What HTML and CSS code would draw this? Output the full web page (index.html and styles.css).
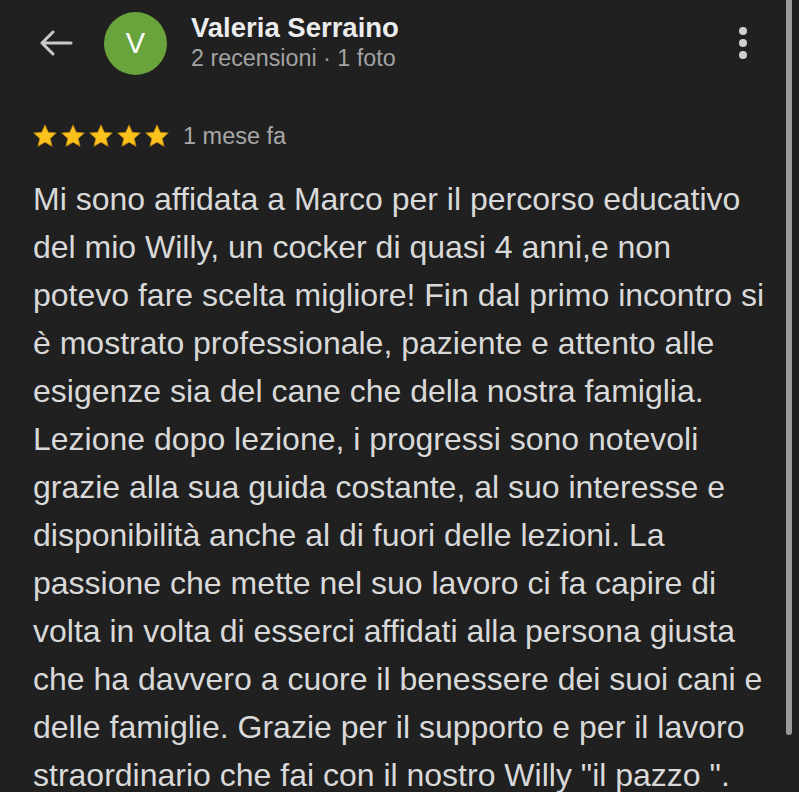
FILE: index.html
```html
<!DOCTYPE html>
<html lang="it">
<head>
  <meta charset="UTF-8" />
  <meta name="viewport" content="width=device-width, initial-scale=1.0" />
  <title>Recensione</title>
  <link rel="stylesheet" href="styles.css">
</head>
<body>
  <div class="screen">
    <main class="content">
      <header class="top-bar">
        <button class="back" aria-label="Indietro">
          <svg width="34" height="26" viewBox="0 0 34 26">
            <path d="M14 2 L3 13 L14 24 M3 13 H32" fill="none" stroke="#c9c9c9" stroke-width="3" stroke-linecap="round" stroke-linejoin="round"/>
          </svg>
        </button>
        <div class="avatar">V</div>
        <div class="author">
          <div class="name">Valeria Serraino</div>
          <div class="meta">2 recensioni · 1 foto</div>
        </div>
        <button class="more" aria-label="Altro">
          <span></span><span></span><span></span>
        </button>
      </header>

      <div class="rating">
        <div class="stars">
          <svg viewBox="0 0 24 24"><path d="M12 1.8 L15 8.6 L22.4 9.3 L16.8 14.2 L18.5 21.5 L12 17.7 L5.5 21.5 L7.2 14.2 L1.6 9.3 L9 8.6 Z"/></svg>
          <svg viewBox="0 0 24 24"><path d="M12 1.8 L15 8.6 L22.4 9.3 L16.8 14.2 L18.5 21.5 L12 17.7 L5.5 21.5 L7.2 14.2 L1.6 9.3 L9 8.6 Z"/></svg>
          <svg viewBox="0 0 24 24"><path d="M12 1.8 L15 8.6 L22.4 9.3 L16.8 14.2 L18.5 21.5 L12 17.7 L5.5 21.5 L7.2 14.2 L1.6 9.3 L9 8.6 Z"/></svg>
          <svg viewBox="0 0 24 24"><path d="M12 1.8 L15 8.6 L22.4 9.3 L16.8 14.2 L18.5 21.5 L12 17.7 L5.5 21.5 L7.2 14.2 L1.6 9.3 L9 8.6 Z"/></svg>
          <svg viewBox="0 0 24 24"><path d="M12 1.8 L15 8.6 L22.4 9.3 L16.8 14.2 L18.5 21.5 L12 17.7 L5.5 21.5 L7.2 14.2 L1.6 9.3 L9 8.6 Z"/></svg>
        </div>
        <span class="when">1 mese fa</span>
      </div>

      <p class="review">Mi sono affidata a Marco per il percorso educativo<br>
del mio Willy, un cocker di quasi 4 anni,e non<br>
potevo fare scelta migliore! Fin dal primo incontro si<br>
è mostrato professionale, paziente e attento alle<br>
esigenze sia del cane che della nostra famiglia.<br>
Lezione dopo lezione, i progressi sono notevoli<br>
grazie alla sua guida costante, al suo interesse e<br>
disponibilità anche al di fuori delle lezioni. La<br>
passione che mette nel suo lavoro ci fa capire di<br>
volta in volta di esserci affidati alla persona giusta<br>
che ha davvero a cuore il benessere dei suoi cani e<br>
delle famiglie. Grazie per il supporto e per il lavoro<br>
straordinario che fai con il nostro Willy "il pazzo ".</p>
    </main>
    <div class="track"></div>
  </div>
</body>
</html>
```

FILE: styles.css
```css
html, body {
  margin: 0;
  padding: 0;
  background-color: #202020;
}

body {
  font-family: 'Liberation Sans', Arial, sans-serif;
  color: #d9d9d9;
}

.screen {
  display: flex;
  align-items: flex-start;
  height: 792px;
  overflow: hidden;
}

.content {
  flex: 1;
  min-width: 0;
}

.track {
  flex: none;
  width: 6px;
  height: 735px;
  margin-right: 7px;
  border-radius: 0 0 3px 3px;
  background-color: #9b9b9b;
}

button {
  background: none;
  border: none;
  padding: 0;
  cursor: pointer;
}

.top-bar {
  display: flex;
  align-items: center;
  height: 86px;
  padding: 0 0 0 39px;
}

.back {
  display: flex;
  width: 34px;
  height: 26px;
}

.avatar {
  width: 63px;
  height: 63px;
  margin-left: 31px;
  border-radius: 50%;
  background-color: #69a33c;
  color: #fff;
  font-size: 29px;
  display: flex;
  align-items: center;
  justify-content: center;
}

.author {
  margin-left: 24px;
  flex: 1;
  margin-top: -2px;
}

.name {
  font-size: 27.5px;
  font-weight: bold;
  color: #ececec;
  line-height: 32px;
}

.meta {
  font-size: 23.3px;
  color: #a3a3a3;
  line-height: 28px;
}

.more {
  display: flex;
  flex-direction: column;
  gap: 4px;
  margin-right: 39px;
}

.more span {
  width: 8px;
  height: 8px;
  border-radius: 50%;
  background-color: #cfcfcf;
}

.rating {
  display: flex;
  align-items: center;
  gap: 13px;
  padding: 0 0 0 32px;
  margin-top: 37px;
  height: 26px;
}

.stars {
  display: flex;
  gap: 2px;
}

.stars svg {
  width: 26px;
  height: 26px;
  fill: #fbc21d;
  stroke: #b9850f;
  stroke-width: 0.8;
  stroke-linejoin: round;
}

.when {
  font-size: 23.5px;
  color: #a8a8a8;
}

.review {
  margin: 26px 0 0 33px;
  font-size: 32px;
  line-height: 48px;
  color: #d9d9d9;
}
```
